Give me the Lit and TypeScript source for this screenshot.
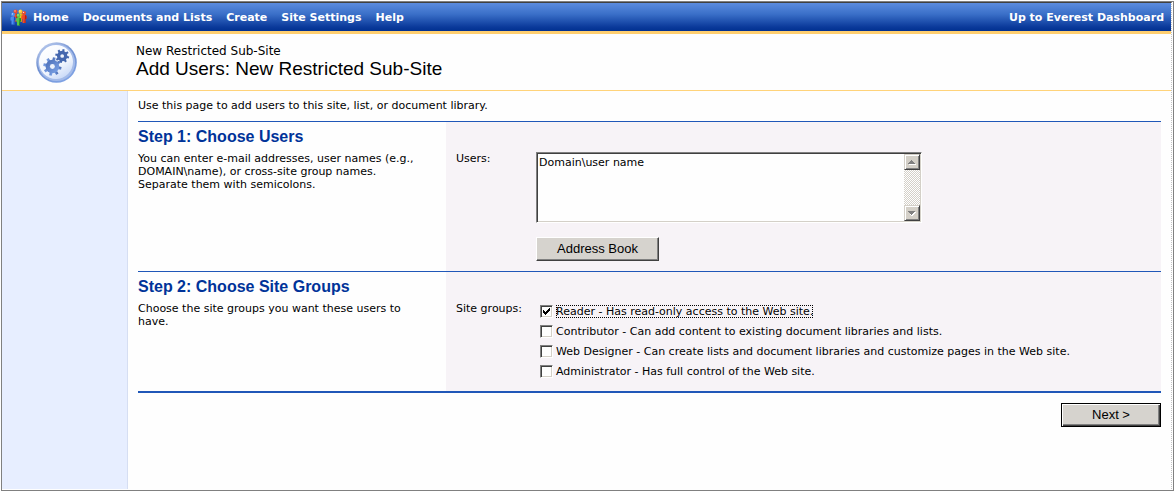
import { LitElement, html, svg, css } from "lit";
import { customElement, state, query } from "lit/decorators.js";
import { classMap } from "lit/directives/class-map.js";

const NAV = ["Home", "Documents and Lists", "Create", "Site Settings", "Help"];

const GROUPS = [
  { id: "reader", label: "Reader - Has read-only access to the Web site." },
  { id: "contributor", label: "Contributor - Can add content to existing document libraries and lists." },
  { id: "designer", label: "Web Designer - Can create lists and document libraries and customize pages in the Web site." },
  { id: "admin", label: "Administrator - Has full control of the Web site." },
];

const gear = (cx: number, cy: number, r: number, fill: string) => svg`
  <g transform="translate(${cx} ${cy})">
    ${[0, 45, 90, 135].map((a) => svg`
      <rect x=${-r * 0.2} y=${-r * 1.34} width=${r * 0.4} height=${r * 2.68} fill=${fill} transform="rotate(${a + 12})"></rect>`)}
    <circle r=${r} fill=${fill}></circle>
    <circle r=${r * 0.36} fill="#eef3fc"></circle>
  </g>`;

const person = (x: number, y: number, color: string, shade: string) => svg`
  <g transform="translate(${x} ${y})">
    <path d="M0 5.5 Q0 4 1.5 4 H3.5 Q5 4 5 5.5 V8 H4 V12 H1 V8 H0 Z" fill=${color}></path>
    <path d="M3.5 4 Q5 4 5 5.5 V8 H4 V12 H3 Z" fill=${shade}></path>
    <circle cx="2.5" cy="2" r="2" fill=${color}></circle>
    <circle cx="2" cy="1.4" r="0.7" fill="#fff" opacity="0.75"></circle>
  </g>`;

@customElement("app-root")
export class AppRoot extends LitElement {
  static styles = css`
    :host {
      display: flex;
      flex-direction: column;
      box-sizing: border-box;
      min-height: 100vh;
      padding: 1px 0 0 1px;
      background: #fefefe;
      color: #000;
      font-family: Verdana, "DejaVu Sans", sans-serif;
      font-size: 11px;
      line-height: 13px;
    }
    * { box-sizing: border-box; }
    .frame {
      flex: 1;
      display: flex;
      flex-direction: column;
      padding-bottom: 1px;
      border: 1px solid #808080;
    }
    .inner {
      flex: 1;
      display: flex;
      flex-direction: column;
      margin-right: 1px;
      border-top: 1px solid #404040;
      border-right: 1px dotted #c4c4c4;
    }
    .nav {
      display: flex;
      align-items: center;
      gap: 14px;
      height: 31px;
      padding: 0 7px 0 8px;
      border-bottom: 3px solid #ffcf70;
      background: linear-gradient(#5b8bde, #3a6fc8 40%, #0b3a9b 85%, #003090);
    }
    .nav a {
      color: #fff;
      font-weight: bold;
      text-decoration: none;
      white-space: nowrap;
    }
    .home { display: flex; align-items: center; gap: 6px; }
    .up { margin-left: auto; }
    .banner {
      display: flex;
      align-items: center;
      height: 57px;
      border-bottom: 1px solid #ffd37a;
    }
    .logo { flex: none; margin: 0 59px 0 34px; }
    .site { font-size: 12px; line-height: 14px; }
    h1 {
      margin: 0;
      font: 19px/22px Arial, "Liberation Sans", sans-serif;
    }
    .body { flex: 1; display: flex; }
    .side {
      flex: none;
      width: 126px;
      background: #e7eeff;
      border-right: 1px solid #d6def2;
    }
    .main { flex: 1; min-width: 0; padding: 8px 10px; }
    .intro { margin: 0 0 9px; }
    .step {
      display: grid;
      grid-template-columns: 308px 1fr;
      border-top: 1px solid #2057b8;
    }
    .about { padding: 4px 24px 8px 0; }
    h2 {
      margin: 0 0 4px;
      color: #003399;
      font: bold 16px/22px Arial, "Liberation Sans", sans-serif;
    }
    .about p { margin: 0; }
    .fields {
      display: grid;
      grid-template-columns: 80px 1fr;
      align-items: start;
      padding: 30px 8px 10px 10px;
      background: #f7f3f7;
    }
    .box {
      display: flex;
      width: 386px;
      max-width: 100%;
      height: 71px;
      border: 1px solid;
      border-color: #808080 #fff #fff #808080;
      background: #fefefe;
      box-shadow: inset 1px 1px #404040, inset -1px -1px #d4d0c8;
      padding: 1px;
    }
    textarea {
      flex: 1;
      min-width: 0;
      padding: 2px 1px;
      border: 0;
      outline: 0;
      resize: none;
      background: transparent;
      font: inherit;
      scrollbar-width: none;
    }
    .scroll {
      flex: none;
      width: 16px;
      display: flex;
      flex-direction: column;
      justify-content: space-between;
      background: repeating-conic-gradient(#d4d0c8 0 25%, #fff 0 50%) 0 0 / 2px 2px;
    }
    .arrow {
      display: block;
      width: 16px;
      height: 16px;
      padding: 0;
      border: 1px solid;
      border-color: #d4d0c8 #404040 #404040 #d4d0c8;
      background: #d4d0c8;
      box-shadow: inset 1px 1px #fff, inset -1px -1px #808080;
    }
    .arrow svg { display: block; }
    .push {
      height: 24px;
      padding: 0 19px;
      border: 1px solid;
      border-color: #fff #404040 #404040 #fff;
      background: #d6d3ce;
      box-shadow: inset -1px -1px #808080;
      color: #000;
      font: 13px/20px Arial, "Liberation Sans", sans-serif;
    }
    .users .push { display: block; min-width: 123px; margin-top: 14px; }
    .groups {
      display: flex;
      flex-direction: column;
      gap: 6px;
      margin: 0;
      padding: 2px 0 3px 4px;
    }
    .group { display: flex; align-items: center; gap: 3px; height: 14px; }
    .group input {
      appearance: none;
      flex: none;
      width: 13px;
      height: 13px;
      margin: 0;
      border: 1px solid;
      border-color: #808080 #fff #fff #808080;
      background: #fefefe;
      box-shadow: inset 1px 1px #404040, inset -1px -1px #d4d0c8;
    }
    .group input:checked {
      background: #fefefe url("data:image/svg+xml,%3Csvg xmlns='http://www.w3.org/2000/svg' width='11' height='11'%3E%3Cpath d='M2 4h1v1h1v1h1v-1h1v-1h1v-1h1v-1h1v3h-1v1h-1v1h-1v1h-1v1h-1v-1h-1v-1h-1z' shape-rendering='crispEdges'/%3E%3C/svg%3E") 0 0 no-repeat;
    }
    .group .active { outline: 1px dotted #000; outline-offset: -1px; }
    .footer {
      display: flex;
      justify-content: flex-end;
      padding-top: 10px;
      border-top: 2px solid #2057b8;
    }
    .next {
      width: 100px;
      border-color: #000;
      box-shadow: inset 1px 1px #fff, inset -1px -1px #404040, inset -2px -2px #808080;
    }
  `;

  @state() private checked = new Set(["reader"]);
  @state() private active = "reader";
  @query("textarea") private area!: HTMLTextAreaElement;

  private toggle(id: string) {
    const next = new Set(this.checked);
    next.has(id) ? next.delete(id) : next.add(id);
    this.checked = next;
    this.active = id;
  }

  render() {
    return html`
      <div class="frame"><div class="inner">
        <nav class="nav">
          <a class="home" href="#">
            <svg width="17" height="17" viewBox="0 0 17 17" aria-hidden="true">
              ${person(3, 0.5, "#f04a28", "#b81c10")}
              ${person(8, 0.5, "#ffc82c", "#d89810")}
              ${person(11.5, 2, "#f04a28", "#b81c10")}
              ${person(0.5, 3.5, "#4a8cf0", "#1c50b8")}
              ${person(6, 4.5, "#58c848", "#208828")}
            </svg>${NAV[0]}</a>
          ${NAV.slice(1).map((t) => html`<a href="#">${t}</a>`)}
          <a class="up" href="#">Up to Everest Dashboard</a>
        </nav>
        <header class="banner">
          <svg class="logo" width="41" height="41" viewBox="0 0 41 41" aria-hidden="true">
            <defs>
              <linearGradient id="rim" x1="0" y1="0" x2="0.6" y2="1">
                <stop offset="0" stop-color="#d0dcf4"></stop>
                <stop offset="0.5" stop-color="#6f8fd0"></stop>
                <stop offset="1" stop-color="#7fa2e4"></stop>
              </linearGradient>
              <linearGradient id="face" x1="0.2" y1="0" x2="0.8" y2="1">
                <stop offset="0" stop-color="#ffffff"></stop>
                <stop offset="0.6" stop-color="#f2f6fd"></stop>
                <stop offset="1" stop-color="#c3d5f7"></stop>
              </linearGradient>
              <linearGradient id="cog" x1="0" y1="0" x2="1" y2="1">
                <stop offset="0" stop-color="#4a6cb4"></stop>
                <stop offset="1" stop-color="#7fa6ea"></stop>
              </linearGradient>
            </defs>
            <circle cx="20.5" cy="20.5" r="20.3" fill="url(#rim)"></circle>
            <circle cx="20.5" cy="20.5" r="18.6" fill="#a4bbe9"></circle>
            <circle cx="20" cy="20" r="17" fill="url(#face)"></circle>
            ${gear(26.2, 14, 5.2, "#4467ae")}
            ${gear(16.4, 24.5, 6.8, "url(#cog)")}
          </svg>
          <div>
            <div class="site">New Restricted Sub-Site</div>
            <h1>Add Users: New Restricted Sub-Site</h1>
          </div>
        </header>
        <div class="body">
          <aside class="side"></aside>
          <main class="main">
            <p class="intro">Use this page to add users to this site, list, or document library.</p>
            <section class="step users">
              <div class="about">
                <h2>Step 1: Choose Users</h2>
                <p>You can enter e-mail addresses, user names (e.g., DOMAIN\\name), or cross-site group names. Separate them with semicolons.</p>
              </div>
              <div class="fields">
                <label for="users">Users:</label>
                <div>
                  <div class="box">
                    <textarea id="users" .value=${"Domain\\user name"}></textarea>
                    <div class="scroll">
                      <button class="arrow" aria-label="Scroll up" @click=${() => this.area.scrollBy(0, -13)}>
                        <svg width="14" height="14" viewBox="0 0 14 14" shape-rendering="crispEdges">
                          <path d="M4 9h7v1H4z" fill="#fff"></path>
                          <path d="M6 5h1v1h1v1h1v1h1v1H3V8h1V7h1V6h1z" fill="#808080"></path>
                        </svg>
                      </button>
                      <button class="arrow" aria-label="Scroll down" @click=${() => this.area.scrollBy(0, 13)}>
                        <svg width="14" height="14" viewBox="0 0 14 14" shape-rendering="crispEdges">
                          <path d="M4 6h7v1h-1v1H9v1H8v1H7v1z" fill="#fff"></path>
                          <path d="M3 5h7v1H9v1H8v1H7v1H6V8H5V7H4V6H3z" fill="#808080"></path>
                        </svg>
                      </button>
                    </div>
                  </div>
                  <button class="push">Address Book</button>
                </div>
              </div>
            </section>
            <section class="step">
              <div class="about">
                <h2>Step 2: Choose Site Groups</h2>
                <p>Choose the site groups you want these users to have.</p>
              </div>
              <div class="fields">
                <span id="groups">Site groups:</span>
                <div class="groups" role="group" aria-labelledby="groups">
                  ${GROUPS.map((g) => html`
                    <div class="group">
                      <input type="checkbox" id=${g.id} .checked=${this.checked.has(g.id)} @change=${() => this.toggle(g.id)}>
                      <label for=${g.id} class=${classMap({ active: this.active === g.id })}>${g.label}</label>
                    </div>`)}
                </div>
              </div>
            </section>
            <div class="footer"><button class="push next">Next &gt;</button></div>
          </main>
        </div>
      </div></div>
    `;
  }
}
